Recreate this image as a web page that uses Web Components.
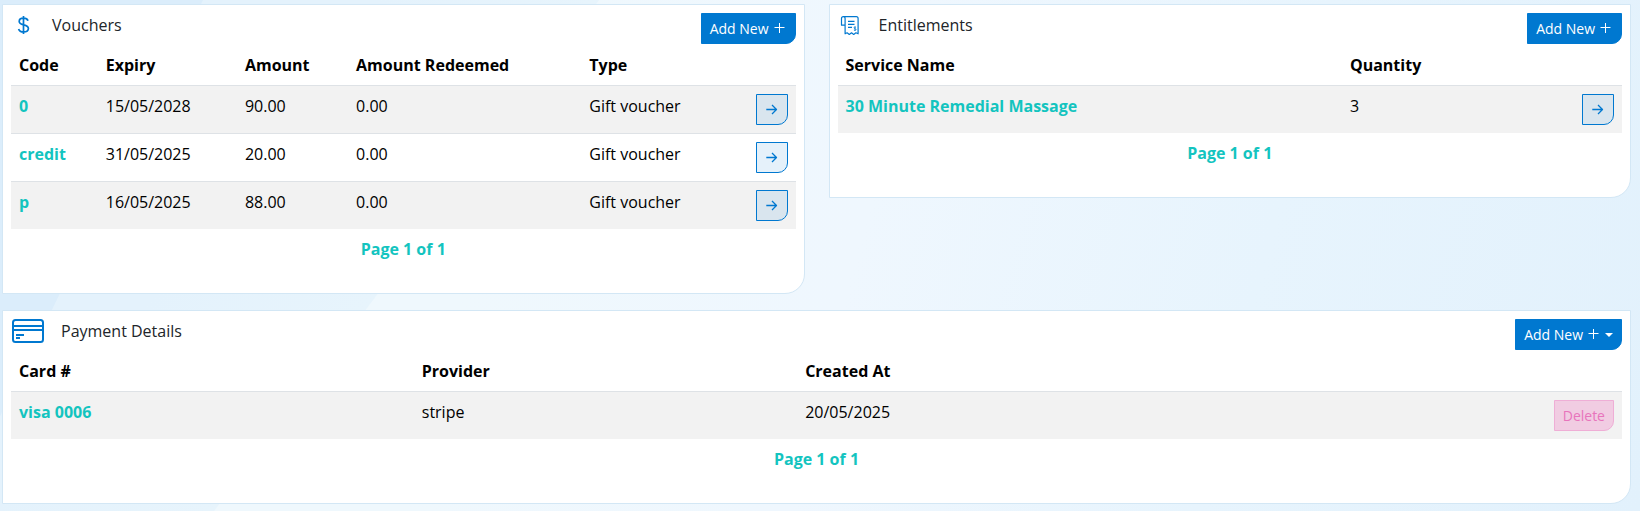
<!DOCTYPE html>
<html lang="en">
<head>
<meta charset="utf-8">
<title>Client account</title>
<style>
    body {
        margin: 0;
        font: 16px/24px "Open Sans", "Noto Sans", sans-serif;
        color: #000;
    }
</style>
</head>
<body>

<account-page>
    <panel-card slot="top" heading="Vouchers">
        <ui-icon slot="icon" name="dollar"></ui-icon>
        <add-button slot="action"></add-button>
        <data-list source="vouchers"></data-list>
    </panel-card>
    <panel-card slot="top" heading="Entitlements">
        <ui-icon slot="icon" name="receipt"></ui-icon>
        <add-button slot="action"></add-button>
        <data-list source="entitlements"></data-list>
    </panel-card>
    <panel-card heading="Payment Details">
        <ui-icon slot="icon" name="card"></ui-icon>
        <add-button slot="action" menu></add-button>
        <data-list source="payments"></data-list>
    </panel-card>
</account-page>

<script>
const ICONS = {
    dollar: `<svg width="24" height="24" viewBox="0 0 24 24" stroke-width="1.7">
        <path d="M12.500 3v18M17 7.800C16.400 5.900 14.800 5.200 12.500 5.200c-2.600 0-4.300 1.300-4.300 3.300 0 4.500 9.200 2.300 9.200 7 0 2.100-1.800 3.400-4.900 3.400-2.600 0-4.300-1-4.900-3"/></svg>`,
    receipt: `<svg width="24" height="24" viewBox="0 0 24 24" stroke-width="1.2">
        <path d="M5.500 3.600h12.800q1.800 0 1.800 2v15.200l-2.200-1-2.200 1.600-2.200-1.600-2.200 1.600-2.200-1.600-2 1V5.600q0-2-1.800-2t-1.800 2v6.600h3.600M10 8.300h6.500M10 11.300h6.500M10 14.300h4"/>
        <path stroke-width=".8" d="M18 14.300c-1-.6-2-.3-2 .5 0 1 2 .7 2 1.700 0 .8-1.200 1.100-2.100.5M17 13.500v4.500"/></svg>`,
    card: `<svg width="33" height="24" viewBox="0 0 33 24" stroke-width="2">
        <rect x="2" y="1" width="30" height="22" rx="2.500"/>
        <path stroke-width="1.8" d="M2 7h30M2 11h30M5 16h8M5 19h4"/></svg>`,
    plus: `<svg width="14" height="14" viewBox="0 0 14 14" stroke-width="1"><path d="M6.500 1v10M1.500 5.500h10"/></svg>`,
    arrow: `<svg width="14" height="14" viewBox="0 0 14 14" stroke-width="1.3"><path d="M1.300 6.500h10M7 2l4.500 4.500L7 11"/></svg>`
};

// widths: share of the table taken by the leading columns, the rest is automatic
const DATA = {
    vouchers: {
        columns: ['Code', 'Expiry', 'Amount', 'Amount Redeemed', 'Type'],
        widths: [],
        rows: [
            ['0', '15/05/2028', '90.00', '0.00', 'Gift voucher'],
            ['credit', '31/05/2025', '20.00', '0.00', 'Gift voucher'],
            ['p', '16/05/2025', '88.00', '0.00', 'Gift voucher']
        ],
        action: 'open'
    },
    entitlements: {
        columns: ['Service Name', 'Quantity'],
        widths: ['64.3%'],
        rows: [['30 Minute Remedial Massage', '3']],
        action: 'open'
    },
    payments: {
        columns: ['Card #', 'Provider', 'Created At'],
        widths: ['25%', '23.8%'],
        rows: [['visa 0006', 'stripe', '20/05/2025']],
        action: 'delete'
    }
};

class UiIcon extends HTMLElement {
    constructor() {
        super();
        this.attachShadow({ mode: 'open' });
    }

    connectedCallback() {
        this.shadowRoot.innerHTML = `
        <style>
            :host { display: inline-flex; }
            svg { display: block; fill: none; stroke: currentColor; stroke-linejoin: round; }
        </style>
        ${ICONS[this.getAttribute('name')]}
        `;
    }
}

class AddButton extends HTMLElement {
    constructor() {
        super();
        this.attachShadow({ mode: 'open' });
    }

    connectedCallback() {
        const menu = this.hasAttribute('menu');
        this.shadowRoot.innerHTML = `
        <style>
            :host { display: block; }
            button {
                display: flex;
                align-items: center;
                gap: 4px;
                padding: 4px 8px;
                border: 1px solid #0078d0;
                border-radius: 0 0 10px 0;
                background: #0078d0;
                color: #fff;
                font: inherit;
                font-size: 14px;
                line-height: 21px;
                cursor: pointer;
            }
            .caret {
                border: 4px solid transparent;
                border-top-color: #fff;
                border-bottom: 0;
            }
        </style>
        <button type="button" ${menu ? 'aria-haspopup="menu"' : ''}>Add New
            <ui-icon name="plus"></ui-icon>${menu ? '<span class="caret"></span>' : ''}
        </button>
        `;
    }
}

class DataList extends HTMLElement {
    constructor() {
        super();
        this.attachShadow({ mode: 'open' });
    }

    connectedCallback() {
        const { columns, widths, rows, action } = DATA[this.getAttribute('source')];
        const button = action === 'delete'
            ? '<button type="button" class="delete">Delete</button>'
            : '<button type="button" class="open" aria-label="Open"><ui-icon name="arrow"></ui-icon></button>';

        this.shadowRoot.innerHTML = `
        <style>
            :host { display: block; }
            table { width: 100%; border-collapse: separate; border-spacing: 0; }
            th, td { padding: 8px; text-align: left; vertical-align: top; }
            th { font-weight: 700; }
            th, tr:not(:last-child) td { border-bottom: 1px solid #dee2e6; }
            tbody tr:nth-child(odd) { background: #f2f2f2; }
            a { color: #13c4bf; font-weight: 700; text-decoration: none; }
            button {
                display: block;
                margin-left: auto;
                padding: 4px 8px;
                border: 1px solid;
                border-radius: 0 0 10px 0;
                font: inherit;
                font-size: 14px;
                line-height: 21px;
                cursor: pointer;
            }
            .open { color: #0078d0; background: rgba(0, 120, 208, .1); }
            .open ui-icon { height: 21px; align-items: center; vertical-align: top; }
            .delete { color: #e874bc; border-color: #efaed6; background: #f1cce2; }
            nav { padding: 8px 8px 24px; text-align: center; }
        </style>
        <table>
            <colgroup>${widths.map(w => `<col style="width: ${w}">`).join('')}</colgroup>
            <thead>
                <tr>${columns.map(c => `<th scope="col">${c}</th>`).join('')}<th></th></tr>
            </thead>
            <tbody>
                ${rows.map(([first, ...rest]) => `
                <tr>
                    <td><a href="#">${first}</a></td>
                    ${rest.map(v => `<td>${v}</td>`).join('')}
                    <td>${button}</td>
                </tr>`).join('')}
            </tbody>
        </table>
        <nav><a href="#">Page 1 of 1</a></nav>
        `;
    }
}

class PanelCard extends HTMLElement {
    constructor() {
        super();
        this.attachShadow({ mode: 'open' });
    }

    connectedCallback() {
        this.shadowRoot.innerHTML = `
        <style>
            :host {
                display: block;
                padding: 8px;
                border: 1px solid #d3e7f5;
                border-radius: 0 0 20px 0;
                background: #fff;
            }
            header {
                display: flex;
                align-items: flex-start;
                gap: 17px;
                min-height: 32px;
            }
            h2 {
                flex: 1;
                margin: 0;
                font-size: 16px;
                font-weight: 400;
                color: #212529;
            }
            ::slotted(ui-icon) { color: #0078d0; }
        </style>
        <header>
            <slot name="icon"></slot>
            <h2>${this.getAttribute('heading')}</h2>
            <slot name="action"></slot>
        </header>
        <slot></slot>
        `;
    }
}

class AccountPage extends HTMLElement {
    constructor() {
        super();
        this.attachShadow({ mode: 'open' });
        this.shadowRoot.innerHTML = `
        <style>
            :host {
                display: flex;
                flex-direction: column;
                gap: 16px;
                box-sizing: border-box;
                min-height: 100vh;
                padding: 4px 9px 7px 2px;
                background:
                    linear-gradient(116deg, #dbedfb 182px, transparent 183px),
                    linear-gradient(127deg, #e4f2fc 300px, #e7f4fc 478px, transparent 479px),
                    linear-gradient(105deg, #eff8fd 30%, #eff7fe 52%, #e7f4fd 75%, #e2f1fc);
            }
            .top {
                display: grid;
                grid-template-columns: 1fr 1fr;
                align-items: start;
                gap: 24px;
            }
        </style>
        <div class="top"><slot name="top"></slot></div>
        <slot></slot>
        `;
    }
}

customElements.define('ui-icon', UiIcon);
customElements.define('add-button', AddButton);
customElements.define('data-list', DataList);
customElements.define('panel-card', PanelCard);
customElements.define('account-page', AccountPage);
</script>
</body>
</html>
